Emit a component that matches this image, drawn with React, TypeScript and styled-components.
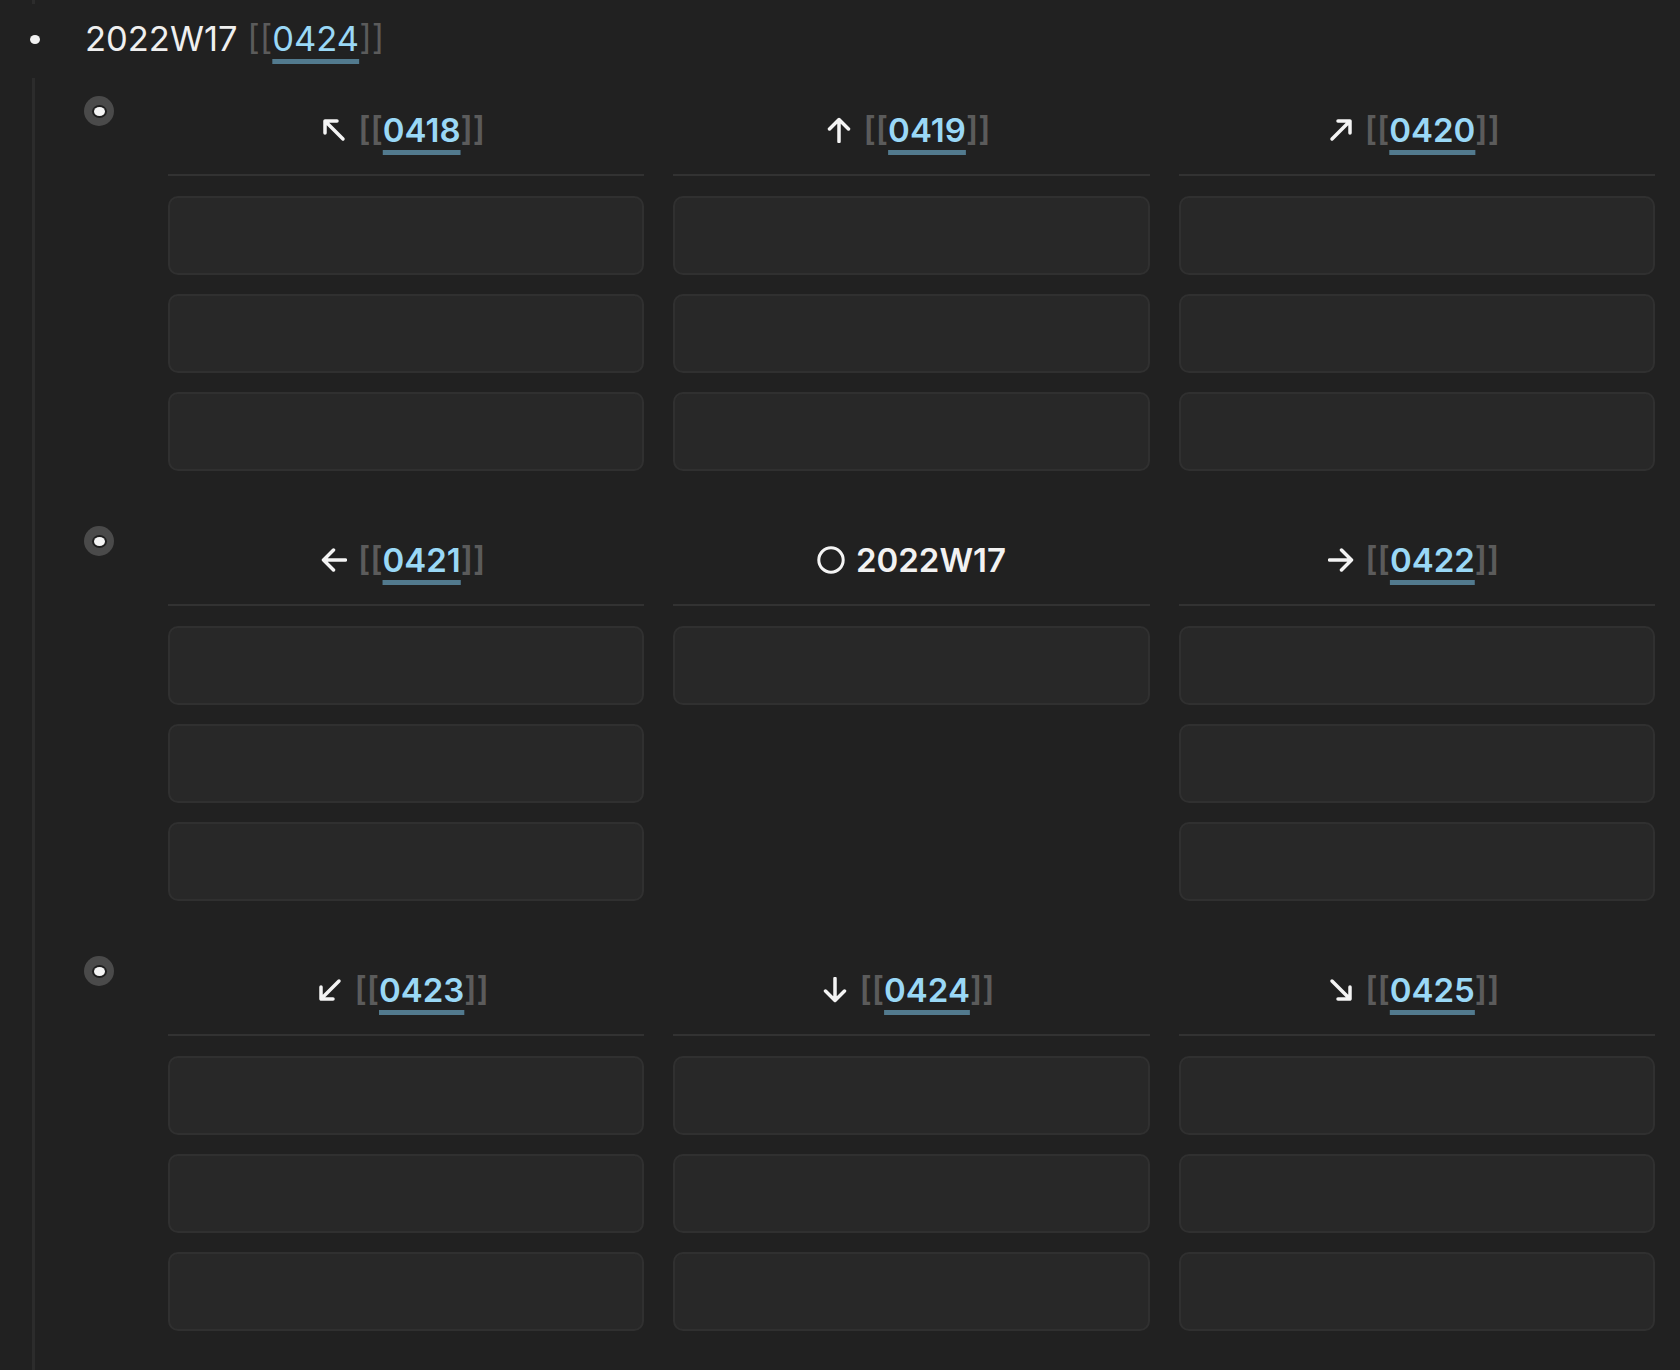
import { createGlobalStyle, styled } from "styled-components";

type Dir = "nw" | "n" | "ne" | "w" | "e" | "sw" | "s" | "se";

interface ICell {
  dir?: Dir;
  link?: string;
  title?: string;
  boxes: number;
}

const GlobalStyle = createGlobalStyle`
  html, body {
    margin: 0;
    padding: 0;
    background: #212121;
  }
  body {
    font-family: Inter, "Noto Sans", sans-serif;
    color: #efefef;
  }
`;

const Page = styled.div`
  min-height: 1370px;
  background: #212121;
  overflow: hidden;
`;

const ParentTrail = styled.div`
  height: 4px;
  margin-left: 32px;
  border-left: 3px solid #2c2c2c;
`;

const TopRow = styled.div`
  display: flex;
  align-items: center;
  height: 44px;
  margin-top: 13px;
`;

const TopBullet = styled.span`
  width: 10px;
  height: 9px;
  margin-left: 30px;
  margin-right: 45px;
  border-radius: 50%;
  background: #f2f2f2;
`;

const TopText = styled.div`
  font-size: 34.5px;
  line-height: 44px;
  font-weight: 400;
  white-space: pre;
`;

const Bracket = styled.span`
  color: #5b5b5b;
`;

const Link = styled.span`
  color: #9ad8f6;
  text-decoration-line: underline;
  text-decoration-color: #527a8e;
  text-decoration-thickness: 5px;
  text-underline-offset: 8px;
  text-decoration-skip-ink: none;
`;

const Children = styled.div`
  margin-top: 17px;
  margin-left: 32px;
  border-left: 3px solid #2c2c2c;
  padding: 18px 0 60px;
`;

const ChildItem = styled.div`
  display: flex;
  align-items: flex-start;
  & + & {
    margin-top: 55px;
  }
`;

const FoldBullet = styled.span`
  flex: none;
  display: flex;
  align-items: center;
  justify-content: center;
  width: 30px;
  height: 30px;
  margin-left: 49px;
  margin-right: 54px;
  border-radius: 50%;
  background: #4a4a4a;
  &::after {
    content: "";
    width: 11px;
    height: 9px;
    border-radius: 50%;
    background: #f4f4f4;
    box-shadow: 0 0 0 2px #1f1f1f;
  }
`;

const Grid = styled.div`
  flex: 1;
  display: grid;
  grid-template-columns: repeat(3, 1fr);
  column-gap: 29px;
  margin-right: 25px;
`;

const Column = styled.div`
  display: flex;
  flex-direction: column;
`;

const Header = styled.div<{ $linked: boolean }>`
  display: flex;
  align-items: center;
  justify-content: center;
  gap: 11px;
  padding: 12px ${(p) => (p.$linked ? "6px" : "0")} 22px 0;
  border-bottom: 2px solid #323232;
  font-size: 33px;
  line-height: 44px;
  font-weight: 600;
  white-space: pre;
  color: #f2f2f2;
`;

const Boxes = styled.div`
  display: flex;
  flex-direction: column;
  gap: 19px;
  margin-top: 20px;
`;

const Box = styled.div`
  height: 79px;
  box-sizing: border-box;
  border: 2px solid #303030;
  border-radius: 10px;
  background: #282828;
`;

const arrowPaths: Record<Dir, string> = {
  n: "M13 24.5V2.5M3.5 12L13 2.5L22.5 12",
  s: "M13 1.5V23.5M3.5 14L13 23.5L22.5 14",
  w: "M24.5 13H2.5M12.5 3L2.5 13L12.5 23",
  e: "M1.5 13H23.5M13.5 3L23.5 13L13.5 23",
  nw: "M4 16V4H16M4 4L22 22",
  ne: "M10 4H22V16M22 4L4 22",
  sw: "M4 10V22H16M4 22L22 4",
  se: "M22 10V22H10M22 22L4 4",
};

function ArrowIcon({ dir }: { dir: Dir }) {
  return (
    <svg width="26" height="26" viewBox="0 0 26 26" fill="none">
      <path
        d={arrowPaths[dir]}
        stroke="#f4f4f4"
        strokeWidth="3.5"
        strokeLinecap="round"
        strokeLinejoin="round"
      />
    </svg>
  );
}

function RingIcon() {
  return (
    <svg width="28" height="28" viewBox="0 0 28 28" fill="none">
      <circle cx="14" cy="14" r="12.2" stroke="#f4f4f4" strokeWidth="3" />
    </svg>
  );
}

const rows: ICell[][] = [
  [
    { dir: "nw", link: "0418", boxes: 3 },
    { dir: "n", link: "0419", boxes: 3 },
    { dir: "ne", link: "0420", boxes: 3 },
  ],
  [
    { dir: "w", link: "0421", boxes: 3 },
    { title: "2022W17", boxes: 1 },
    { dir: "e", link: "0422", boxes: 3 },
  ],
  [
    { dir: "sw", link: "0423", boxes: 3 },
    { dir: "s", link: "0424", boxes: 3 },
    { dir: "se", link: "0425", boxes: 3 },
  ],
];

function App() {
  return (
    <Page>
      <GlobalStyle />
      <ParentTrail />
      <TopRow>
        <TopBullet />
        <TopText>
          2022W17 <Bracket>[[</Bracket>
          <Link>0424</Link>
          <Bracket>]]</Bracket>
        </TopText>
      </TopRow>
      <Children>
        {rows.map((row, i) => (
          <ChildItem key={i}>
            <FoldBullet />
            <Grid>
              {row.map((cell, j) => (
                <Column key={j}>
                  <Header $linked={!!cell.link}>
                    {cell.dir ? <ArrowIcon dir={cell.dir} /> : <RingIcon />}
                    {cell.link ? (
                      <span>
                        <Bracket>[[</Bracket>
                        <Link>{cell.link}</Link>
                        <Bracket>]]</Bracket>
                      </span>
                    ) : (
                      <span>{cell.title}</span>
                    )}
                  </Header>
                  <Boxes>
                    {Array.from({ length: cell.boxes }).map((_, k) => (
                      <Box key={k} />
                    ))}
                  </Boxes>
                </Column>
              ))}
            </Grid>
          </ChildItem>
        ))}
      </Children>
    </Page>
  );
}

export default App;
